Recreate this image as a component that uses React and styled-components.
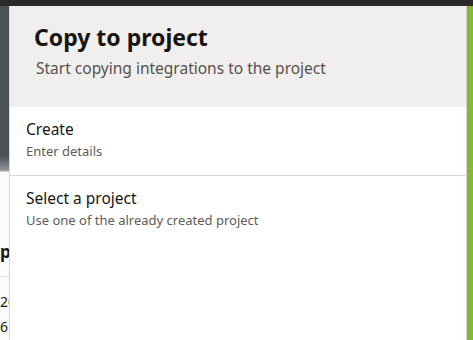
import React from "react";
import styled, { createGlobalStyle } from "styled-components";

const Global = createGlobalStyle`
  html, body { margin: 0; padding: 0; background: #fff; }
  body { font-family: "Noto Sans", "Open Sans", sans-serif; }
`;

const Page = styled.div`
  width: 473px;
  height: 340px;
  display: flex;
  flex-direction: column;
  overflow: hidden;
`;

const TopBar = styled.div`
  height: 6px;
  background: #2b2a29;
  flex: none;
`;

const Body = styled.div`
  flex: 1;
  display: flex;
`;

const Behind = styled.div`
  width: 9px;
  flex: none;
  overflow: hidden;
  display: flex;
  flex-direction: column;
  background: #fbfbfb;
`;

const BehindHeader = styled.div`
  height: 166px;
  background: linear-gradient(#4b5256 0, #4b5256 150px, #8d9296 164px, #dfe1e2 166px);
  flex: none;
`;

const BehindTitle = styled.div`
  margin-top: 68px;
  font-weight: 700;
  font-size: 17px;
  line-height: 24px;
  color: #1a1a1a;
  white-space: nowrap;
  padding-bottom: 12px;
  border-bottom: 1px solid #e0e0e0;
`;

const BehindCell = styled.div`
  font-size: 14px;
  line-height: 20px;
  color: #222;
  white-space: nowrap;
  margin-top: ${(p) => p.$mt}px;
`;

const Drawer = styled.div`
  flex: 1;
  display: flex;
  flex-direction: column;
  background: #fff;
  border-left: 1px solid #d8d6d4;
  border-right: 1px solid #d8d6d4;
`;

const Header = styled.div`
  background: #f1efed;
  height: 101px;
  padding: 17px 0 0 24px;
  box-sizing: border-box;
  flex: none;
`;

const Title = styled.h1`
  margin: 0;
  font-size: 23px;
  line-height: 28px;
  font-weight: 700;
  color: #161513;
`;

const Subtitle = styled.div`
  margin: 7px 0 0 2px;
  font-size: 15.5px;
  line-height: 20px;
  color: #55524f;
`;

const Option = styled.div`
  padding: 12px 16px 15px 16px;
  border-bottom: ${(p) => (p.$divider ? "1px solid #dcdad8" : "none")};
`;

const OptionTitle = styled.div`
  font-size: 15.5px;
  line-height: 20px;
  color: #161513;
`;

const OptionText = styled.div`
  font-size: 13px;
  line-height: 18px;
  margin-top: 3px;
  color: #5e5b58;
`;

const Accent = styled.div`
  width: 6px;
  flex: none;
  background: #86b82c;
`;

export default function App() {
  return (
    <Page>
      <Global />
      <TopBar />
      <Body>
        <Behind>
          <BehindHeader />
          <BehindTitle>project</BehindTitle>
          <BehindCell $mt={15}>2025</BehindCell>
          <BehindCell $mt={5}>6</BehindCell>
        </Behind>
        <Drawer>
          <Header>
            <Title>Copy to project</Title>
            <Subtitle>Start copying integrations to the project</Subtitle>
          </Header>
          <Option $divider>
            <OptionTitle>Create</OptionTitle>
            <OptionText>Enter details</OptionText>
          </Option>
          <Option>
            <OptionTitle>Select a project</OptionTitle>
            <OptionText>Use one of the already created project</OptionText>
          </Option>
        </Drawer>
        <Accent />
      </Body>
    </Page>
  );
}
